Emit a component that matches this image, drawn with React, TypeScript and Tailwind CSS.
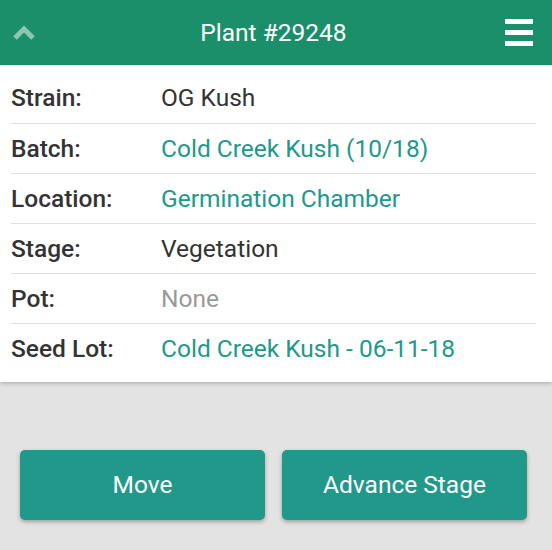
import React from "react";

const rows: { label: string; value: string; tone: "dark" | "link" | "muted" }[] = [
  { label: "Strain:", value: "OG Kush", tone: "dark" },
  { label: "Batch:", value: "Cold Creek Kush (10/18)", tone: "link" },
  { label: "Location:", value: "Germination Chamber", tone: "link" },
  { label: "Stage:", value: "Vegetation", tone: "dark" },
  { label: "Pot:", value: "None", tone: "muted" },
  { label: "Seed Lot:", value: "Cold Creek Kush - 06-11-18", tone: "link" },
];

const toneClasses: Record<string, string> = {
  dark: "text-[#333333]",
  link: "text-[#21998a]",
  muted: "text-[#999999]",
};

export default function App() {
  return (
    <div
      className="flex h-[550px] w-[552px] flex-col bg-[#e3e3e3]"
      style={{ fontFamily: "Roboto, 'Liberation Sans', sans-serif" }}
    >
      {/* HEADER */}
      <header className="flex h-[65px] items-center justify-between bg-[#1b8f69] pl-3 pr-[19px]">
        <svg width="24" height="17" viewBox="0 0 24 17" className="opacity-50">
          <path d="M3 14 L12 5 L21 14" fill="none" stroke="white" strokeWidth="5" />
        </svg>
        <h1 className="pl-[6px] pt-px text-[24.5px] text-white">Plant #29248</h1>
        <div className="flex w-7 flex-col gap-[6px]">
          <span className="block h-[5px] bg-white" />
          <span className="block h-[5px] bg-white" />
          <span className="block h-[5px] bg-white" />
        </div>
      </header>

      {/* DETAILS CARD */}
      <div className="bg-white pb-[9px] pl-[11px] pr-4 pt-2 shadow-[0_2px_4px_rgba(0,0,0,0.2)]">
        {rows.map((row, i) => (
          <div
            key={row.label}
            className={`flex h-[50px] items-center pt-px text-[24.5px] ${
              i > 0 ? "border-t border-[#e0e0e0]" : ""
            }`}
          >
            <span className="w-[150px] font-medium text-[#333333]">{row.label}</span>
            <span className={toneClasses[row.tone]}>{row.value}</span>
          </div>
        ))}
      </div>

      {/* ACTIONS */}
      <div className="mt-[68px] flex gap-[17px] pl-5 pr-[25px]">
        <button className="h-[70px] flex-1 rounded-[5px] bg-[#21998a] text-[24.5px] text-white shadow-[0_2px_4px_rgba(0,0,0,0.3)]">
          Move
        </button>
        <button className="h-[70px] flex-1 rounded-[5px] bg-[#21998a] text-[24.5px] text-white shadow-[0_2px_4px_rgba(0,0,0,0.3)]">
          Advance Stage
        </button>
      </div>
    </div>
  );
}
